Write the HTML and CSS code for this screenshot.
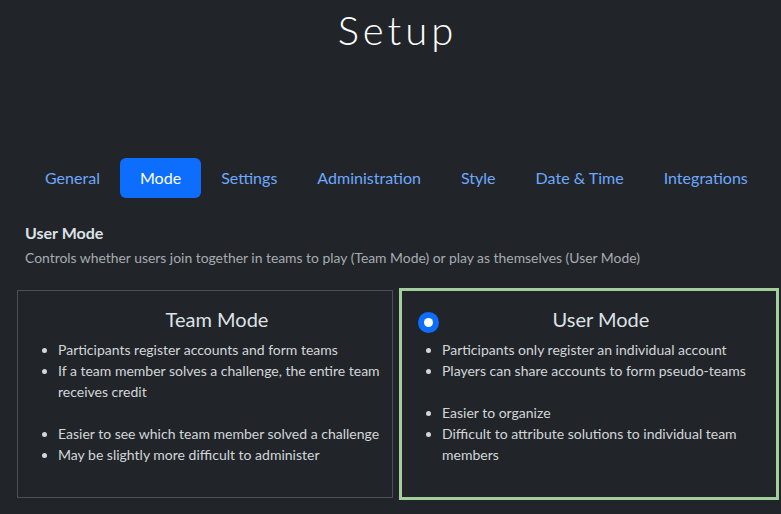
FILE: index.html
```html
<!DOCTYPE html>
<html lang="en">
<head>
<meta charset="utf-8">
<title>Setup</title>
<link rel="stylesheet" href="styles.css">
</head>
<body>
<div class="page">
  <header class="hero">
    <h1 class="hero-title">Setup</h1>
  </header>

  <nav class="tabs">
    <a class="tab" href="#">General</a>
    <a class="tab active" href="#">Mode</a>
    <a class="tab" href="#">Settings</a>
    <a class="tab" href="#">Administration</a>
    <a class="tab" href="#">Style</a>
    <a class="tab" href="#">Date &amp; Time</a>
    <a class="tab" href="#">Integrations</a>
  </nav>

  <section class="field">
    <h2 class="field-label">User Mode</h2>
    <p class="field-help">Controls whether users join together in teams to play (Team Mode) or play as themselves (User Mode)</p>
  </section>

  <div class="modes">
    <div class="mode-card">
      <div class="mode-body">
        <h3 class="mode-title">Team Mode</h3>
        <ul class="mode-list gap">
          <li>Participants register accounts and form teams</li>
          <li>If a team member solves a challenge, the entire team receives credit</li>
        </ul>
        <ul class="mode-list">
          <li>Easier to see which team member solved a challenge</li>
          <li>May be slightly more difficult to administer</li>
        </ul>
      </div>
    </div>
    <div class="mode-card selected">
      <span class="radio"><span class="radio-dot"></span></span>
      <div class="mode-body">
        <h3 class="mode-title">User Mode</h3>
        <ul class="mode-list gap">
          <li>Participants only register an individual account</li>
          <li>Players can share accounts to form pseudo-teams</li>
        </ul>
        <ul class="mode-list">
          <li>Easier to organize</li>
          <li>Difficult to attribute solutions to individual team members</li>
        </ul>
      </div>
    </div>
  </div>
</div>
</body>
</html>
```

FILE: styles.css
```css
* { box-sizing: border-box; }

html, body {
  margin: 0;
  padding: 0;
  background: #212529;
  color: #dee2e6;
  font-family: Lato, "Open Sans", "Liberation Sans", sans-serif;
  overflow: hidden;
}

.page {
  width: 781px;
  height: 514px;
}

.hero {
  padding-top: 6px;
  height: 158px;
  text-align: center;
}

.hero-title {
  margin: 0;
  padding-left: 14px;
  font-size: 40px;
  line-height: 48px;
  font-weight: 300;
  letter-spacing: 4px;
  color: #ffffff;
}

.tabs {
  display: flex;
  padding-left: 25px;
}

.tab {
  display: block;
  padding: 8px 20px;
  font-size: 16.05px;
  line-height: 24px;
  color: #6ea8fe;
  text-decoration: none;
  border-radius: 6px;
  white-space: nowrap;
}

.tab.active {
  background: #0d6efd;
  color: #ffffff;
}

.field {
  padding: 23px 25px 0;
}

.field-label {
  margin: 0;
  font-size: 16px;
  line-height: 24px;
  font-weight: 700;
  color: #dee2e6;
}

.field-help {
  margin: 2px 0 0;
  font-size: 13.9px;
  line-height: 21px;
  color: #a7acb1;
}

.modes {
  display: flex;
  gap: 8px;
  padding-left: 17px;
  margin-top: 22px;
}

.mode-card {
  position: relative;
  width: 376px;
  height: 208px;
  border: 1px solid #4b5057;
}

.mode-card.selected {
  border: 3px solid #a3cf9d;
  margin: -2px;
  width: 380px;
  height: 212px;
}

.mode-body {
  padding: 16px 12px 16px 16px;
}

.mode-title {
  margin: 0 0 8px;
  padding-left: 20px;
  text-align: center;
  font-size: 20px;
  line-height: 24px;
  font-weight: 400;
  color: #dee2e6;
}

.mode-list {
  margin: 0;
  padding-left: 24px;
  font-size: 14px;
  line-height: 21px;
  color: #d3d6d9;
}

.mode-list.gap {
  margin-bottom: 21px;
}

.radio {
  position: absolute;
  left: 16px;
  top: 21px;
  width: 21px;
  height: 21px;
  border-radius: 50%;
  background: #0d6efd;
  display: flex;
  align-items: center;
  justify-content: center;
}

.radio-dot {
  width: 9px;
  height: 9px;
  border-radius: 50%;
  background: #ffffff;
}
```
